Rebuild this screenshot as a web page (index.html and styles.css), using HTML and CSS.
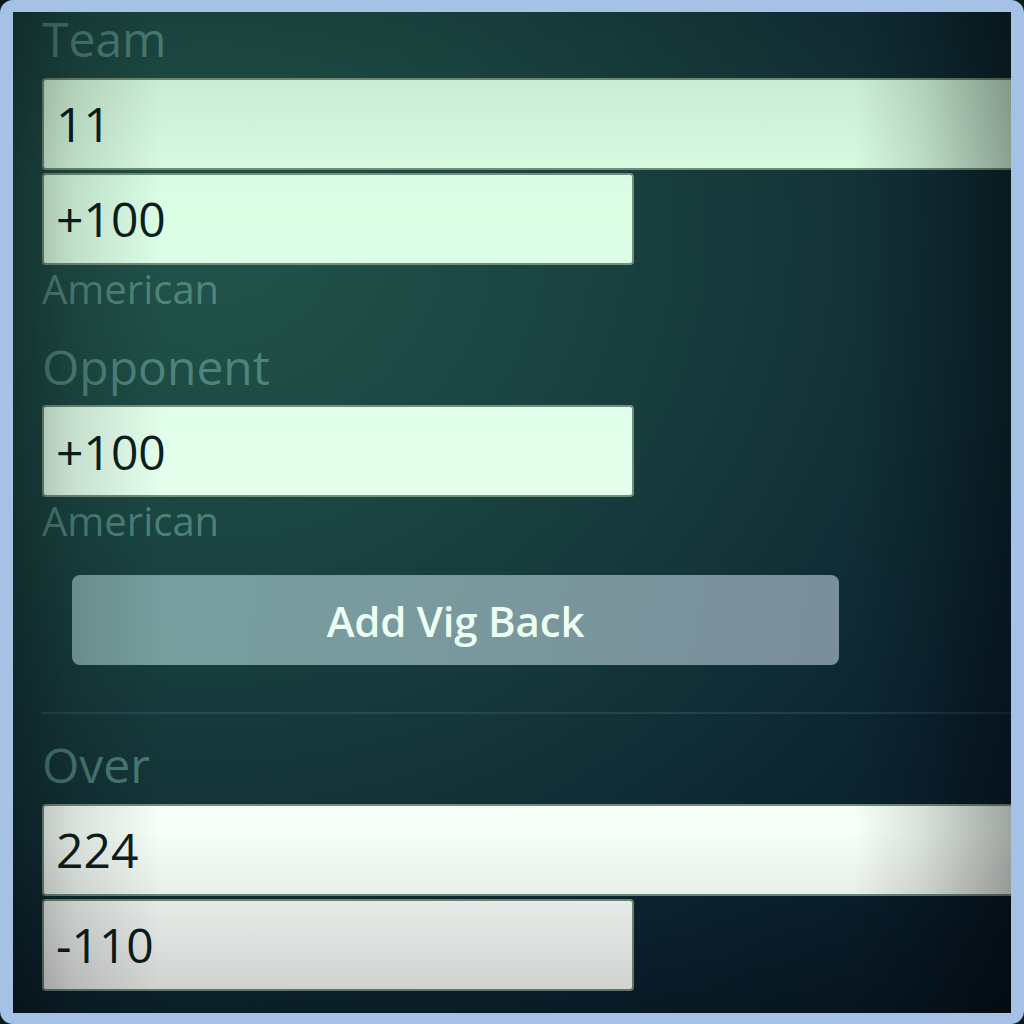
FILE: index.html
```html
<!DOCTYPE html>
<html lang="en">
<head>
<meta charset="utf-8">
<title>Vig Calculator</title>
<link rel="stylesheet" href="styles.css">
</head>
<body>
<div class="frame">
  <div class="content">
    <div class="field first">
      <label class="label">Team</label>
      <input class="input wide" type="text" value="11">
      <input class="input odds" type="text" value="+100">
      <div class="hint">American</div>
    </div>
    <div class="field">
      <label class="label">Opponent</label>
      <input class="input odds" type="text" value="+100">
      <div class="hint">American</div>
    </div>
    <button class="btn" type="button">Add Vig Back</button>
    <hr class="divider">
    <div class="field over">
      <label class="label">Over</label>
      <input class="input wide" type="text" value="224">
      <input class="input odds" type="text" value="-110">
    </div>
  </div>
  <div class="shade"></div>
</div>
</body>
</html>
```
FILE: styles.css
```css
html, body {
  margin: 0;
  padding: 0;
  background: #0b1a1e;
}

.frame {
  position: relative;
  width: 1024px;
  height: 1024px;
  box-sizing: border-box;
  border-style: solid;
  border-color: #a6c1e6;
  border-width: 12px 13px 11px 13px;
  border-radius: 13px;
  overflow: hidden;
  background:
    radial-gradient(ellipse 1250px 1150px at 20% 22%, #22544a 0%, #1b4642 25%, #143539 48%, #0b2230 72%, #05111f 100%);
  font-family: "Open Sans", "Noto Sans", sans-serif;
}

.content {
  display: flex;
  flex-direction: column;
  align-items: flex-start;
  padding: 0 0 0 29px;
  margin-top: -2px;
}

.field {
  display: flex;
  flex-direction: column;
  align-items: flex-start;
  gap: 3px;
}

.field + .field {
  margin-top: 25px;
}

.label {
  display: block;
  font-size: 48px;
  line-height: 57.6px;
  color: rgba(110, 170, 160, 0.6);
  margin-bottom: 7px;
}

.input {
  box-sizing: border-box;
  height: 92px;
  border: 2px solid #728f7b;
  border-radius: 4px;
  padding: 0 0 0 12px;
  margin: 0;
  font-family: "Open Sans", "Noto Sans", sans-serif;
  font-size: 48px;
  color: #0c201d;
  outline: none;
  background: linear-gradient(to bottom, #d6fde1 0px, #dcfee6 300px, #e4ffec 500px, #f6fff8 820px, #ffffff 1024px);
  background-attachment: fixed;
}

.input.wide {
  width: 1100px;
}

.input.odds {
  width: 592px;
}

.hint {
  font-size: 40px;
  line-height: 48px;
  color: rgba(110, 170, 160, 0.6);
  margin-top: -3px;
}

.btn {
  margin: 30px 0 0 30px;
  width: 767px;
  height: 90px;
  border: none;
  border-radius: 8px;
  background: linear-gradient(100deg, #76a09e 0%, #799a9e 45%, #7b8e9b 100%);
  color: #ecfff3;
  font-family: "Open Sans", "Noto Sans", sans-serif;
  font-weight: 600;
  font-size: 42px;
  letter-spacing: -0.2px;
  padding: 0;
}

.divider {
  width: 1100px;
  margin: 47px 0 0 0;
  border: none;
  border-top: 2px solid rgba(130, 170, 180, 0.16);
  height: 0;
}

.field.over {
  margin-top: 22px;
}

.shade {
  position: absolute;
  inset: 0;
  pointer-events: none;
  background:
    linear-gradient(to right, rgba(0, 0, 0, 0.3) 0px, rgba(0, 0, 0, 0.12) 60px, rgba(0, 0, 0, 0) 150px, rgba(0, 0, 0, 0) 840px, rgba(0, 0, 0, 0.12) 910px, rgba(0, 0, 0, 0.36) 1000px),
    linear-gradient(to bottom, rgba(0, 0, 0, 0.1) 0px, rgba(0, 0, 0, 0) 180px, rgba(0, 0, 0, 0) 820px, rgba(0, 0, 0, 0.2) 1000px);
}
```
